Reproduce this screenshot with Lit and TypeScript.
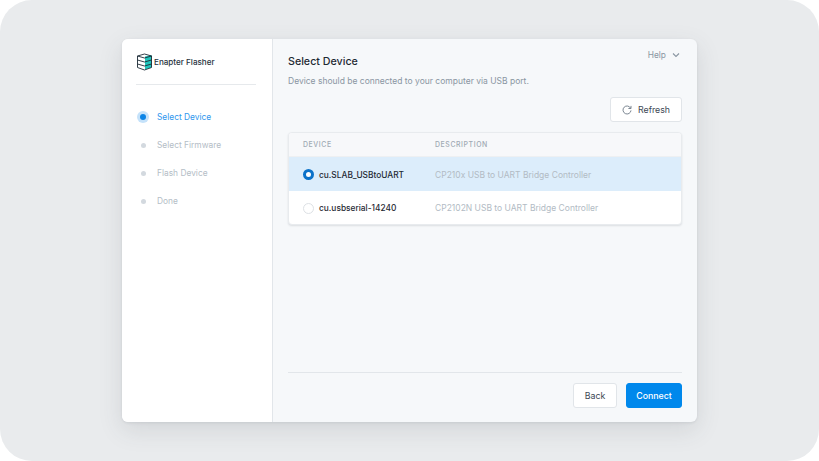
import { LitElement, html, css } from "lit";
import { customElement } from "lit/decorators.js";

@customElement("app-root")
export class AppRoot extends LitElement {
  static styles = css`
    :host { display: block; width: 819px; height: 461px; background: #fff; font-family: Inter, "Noto Sans", sans-serif; }
    * { box-sizing: border-box; }
    .screen { width: 819px; height: 461px; background: #e9ebed; border-radius: 32px; padding: 39px 122px; }
    .window { width: 575px; height: 383px; display: flex; border-radius: 6px; overflow: hidden; box-shadow: 0 8px 24px rgba(60,70,80,.13), 0 1px 3px rgba(60,70,80,.1); background: #f6f8fa; }
    .side { width: 151px; flex: none; background: #fff; border-right: 1px solid #e2e6ea; padding: 14px 16px 0 14px; }
    .brand { display: flex; align-items: flex-start; gap: 1px; height: 32px; border-bottom: 1px solid #e6e9ec; font-size: 8.1px; font-weight: 500; color: #27323d; }
    .brand span { margin-top: 3px; line-height: 12px; }
    .steps { display: flex; flex-direction: column; gap: 8px; margin-top: 22px; }
    .step { display: flex; align-items: center; height: 20px; gap: 8px; font-size: 8.4px; color: #b4bdc6; }
    .step.on { color: #2f97ee; }
    .dot { width: 12px; height: 12px; flex: none; display: grid; place-items: center; margin-left: 1px; }
    .dot i { width: 5px; height: 5px; border-radius: 50%; background: #d3d9df; }
    .on .dot { background: #c5e2fa; border-radius: 50%; }
    .on .dot i { width: 6px; height: 6px; background: #0b84e6; }
    .main { flex: 1; display: flex; flex-direction: column; padding: 0 15px; }
    .top { display: flex; justify-content: space-between; }
    h1 { margin: 15px 0 0; font-size: 10.7px; line-height: 16px; font-weight: 500; color: #1f2933; }
    .help { display: flex; align-items: center; gap: 6px; margin-top: 10px; height: 12px; padding-right: 2px; font-size: 8.4px; color: #8a96a2; }
    .sub { margin: 5px 0 0; font-size: 8.5px; line-height: 12px; color: #8a96a2; }
    .tools { display: flex; justify-content: flex-end; margin-top: 10px; }
    .btn { display: inline-flex; align-items: center; justify-content: center; height: 25px; border: 1px solid #e1e5e9; border-radius: 3px; background: #fff; font-size: 8.8px; font-weight: 400; color: #3c4854; font-family: inherit; padding: 0; }
    .refresh { width: 72px; gap: 6px; }
    .table { margin-top: 10px; background: #fff; border-radius: 4px; border: 1px solid #e8ebee; box-shadow: 0 1px 2px rgba(60,70,80,.14); overflow: hidden; }
    .row { display: grid; grid-template-columns: 132px 1fr; align-items: center; padding-left: 14px; }
    .head { height: 24px; background: #f7f8fa; font-size: 6.9px; font-weight: 500; letter-spacing: .6px; color: #a0aab4; border-bottom: 1px solid #eef0f2; }
    .item { height: 33px; padding-top: 1px; font-size: 8.5px; color: #b2bbc4; }
    .item.sel { background: #dcedfb; height: 34px; }
    .name { display: flex; align-items: center; gap: 5px; color: #1f2933; font-weight: 500; font-size: 8.35px; }
    .radio { width: 11px; height: 11px; border-radius: 50%; border: 1px solid #dde1e5; background: #fff; flex: none; }
    .sel .radio { border: 3px solid #0b72c9; }
    .foot { margin-top: auto; height: 50px; border-top: 1px solid #e2e6ea; display: flex; justify-content: flex-end; align-items: flex-start; gap: 9px; padding-top: 10px; }
    .back { width: 44px; height: 25px; }
    .connect { width: 56px; height: 25px; background: #0088ec; border-color: #0088ec; color: #fff; font-weight: 500; }
  `;

  render() {
    return html`
      <div class="screen">
        <div class="window">
          <aside class="side">
            <div class="brand">
              <svg width="17" height="18" viewBox="0 0 17 18" fill="none">
                <path d="M9 3.6 15.5 2v12.5L9 16.5z" fill="#1fc4bb"/>
                <path d="M8.5 1 15.5 3v11.5L8.5 17 1.5 14.5V3zM1.5 3 8.5 5l7-2M1.5 7 8.5 9l7-2M1.5 11 8.5 13l7-2" stroke="#1c2a36" stroke-width=".9" stroke-linejoin="round"/>
              </svg>
              <span>Enapter Flasher</span>
            </div>
            <div class="steps">
              <div class="step on"><span class="dot"><i></i></span>Select Device</div>
              <div class="step"><span class="dot"><i></i></span>Select Firmware</div>
              <div class="step"><span class="dot"><i></i></span>Flash Device</div>
              <div class="step"><span class="dot"><i></i></span>Done</div>
            </div>
          </aside>
          <main class="main">
            <div class="top">
              <h1>Select Device</h1>
              <div class="help">Help
                <svg width="8" height="6" viewBox="0 0 8 6" fill="none"><path d="M1 1.5 4 4.5 7 1.5" stroke="#8a96a2" stroke-width="1.1"/></svg>
              </div>
            </div>
            <p class="sub">Device should be connected to your computer via USB port.</p>
            <div class="tools">
              <button class="btn refresh">
                <svg width="10" height="10" viewBox="0 0 10 10" fill="none"><path d="M8.6 3.2A4 4 0 1 0 9 5.4" stroke="#6d7986" stroke-width=".9"/><path d="M9 .9v2.6H6.4" stroke="#6d7986" stroke-width=".9"/></svg>
                Refresh
              </button>
            </div>
            <div class="table">
              <div class="row head"><span>DEVICE</span><span>DESCRIPTION</span></div>
              <div class="row item sel"><span class="name"><span class="radio"></span>cu.SLAB_USBtoUART</span><span>CP210x USB to UART Bridge Controller</span></div>
              <div class="row item"><span class="name"><span class="radio"></span>cu.usbserial-14240</span><span>CP2102N USB to UART Bridge Controller</span></div>
            </div>
            <div class="foot">
              <button class="btn back">Back</button>
              <button class="btn connect">Connect</button>
            </div>
          </main>
        </div>
      </div>
    `;
  }
}
